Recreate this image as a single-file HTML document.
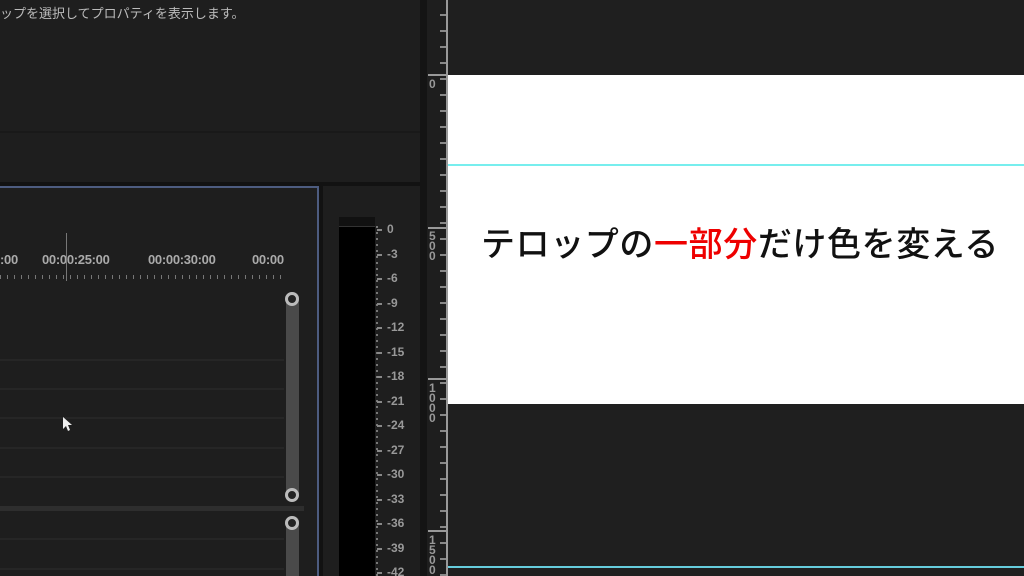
<!DOCTYPE html>
<html><head><meta charset="utf-8"><style>
html,body{margin:0;width:1024px;height:576px;overflow:hidden}
body{background:#1e1e1e;position:relative;font-family:"Liberation Sans","Noto Sans CJK JP",sans-serif}
div{position:absolute;box-sizing:border-box}
.hl{left:0;width:284px;height:2px;background:#262626}
.t{color:#aaa;font-size:13px;top:252px;font-weight:bold;letter-spacing:-0.3px}
.m{color:#999;font-size:12px;left:387px;font-weight:bold}
.k{left:377px;width:5px;height:2px;background:#888}
.c{width:14px;height:14px;border-radius:50%;border:3px solid #bbb;background:#222;left:285px}
</style></head><body>
<div style="left:0;top:0;width:420px;height:182px;background:#1e1e1e"></div>
<div style="left:0;top:131px;width:420px;height:2px;background:#191919"></div>
<div style="left:0;top:3px;color:#bbb;font-size:13px;white-space:nowrap">ップを選択してプロパティを表示します。</div>
<div style="left:0;top:182px;width:428px;height:4px;background:#121212"></div>
<div style="left:319px;top:186px;width:4px;height:390px;background:#121212"></div>
<div style="left:0;top:186px;width:319px;height:390px;border-top:2px solid #4d5c80;border-right:2px solid #4d5c80;background:#1e1e1e"></div>
<div class="t" style="left:0">:00</div>
<div class="t" style="left:42px">00:00:25:00</div>
<div class="t" style="left:148px">00:00:30:00</div>
<div class="t" style="left:252px">00:00</div>
<div style="left:66px;top:233px;width:1px;height:48px;background:#777"></div>
<div style="left:0;top:275px;width:284px;height:4px;background:repeating-linear-gradient(90deg,#777 0 1px,transparent 1px 7px)"></div>
<div class="hl" style="top:359px"></div><div class="hl" style="top:388px"></div><div class="hl" style="top:417px"></div><div class="hl" style="top:447px"></div><div class="hl" style="top:476px"></div>
<div style="left:0;top:506px;width:304px;height:5px;background:#2e2e2e"></div>
<div class="hl" style="top:538px"></div><div class="hl" style="top:568px"></div>
<div style="left:286px;top:292px;width:13px;height:208px;background:#4a4a4a;border-radius:6px"></div>
<div style="left:286px;top:516px;width:13px;height:70px;background:#4a4a4a;border-radius:6px"></div>
<div class="c" style="top:292px"></div><div class="c" style="top:488px"></div><div class="c" style="top:516px"></div>
<svg style="position:absolute;left:62px;top:416px" width="10" height="16"><path d="M1 1 L1 13 L4 10 L6 15 L8 14 L6 9 L10 9 Z" fill="#eee"/></svg>
<div style="left:323px;top:186px;width:97px;height:390px;background:#1e1e1e"></div>
<div style="left:339px;top:217px;width:36px;height:359px;background:#000"></div>
<div style="left:339px;top:217px;width:36px;height:10px;background:#111;border-bottom:1px solid #333"></div>
<div style="left:376px;top:226px;width:2px;height:350px;background:repeating-linear-gradient(180deg,#777 0 2px,transparent 2px 6px)"></div>
<div class="k" style="top:229px"></div><div class="k" style="top:254px"></div><div class="k" style="top:278px"></div><div class="k" style="top:303px"></div><div class="k" style="top:327px"></div><div class="k" style="top:352px"></div><div class="k" style="top:376px"></div><div class="k" style="top:401px"></div><div class="k" style="top:425px"></div><div class="k" style="top:450px"></div><div class="k" style="top:474px"></div><div class="k" style="top:499px"></div><div class="k" style="top:523px"></div><div class="k" style="top:548px"></div><div class="k" style="top:572px"></div>
<div class="m" style="top:222px">0</div><div class="m" style="top:247px">-3</div><div class="m" style="top:271px">-6</div><div class="m" style="top:296px">-9</div><div class="m" style="top:320px">-12</div><div class="m" style="top:345px">-15</div><div class="m" style="top:369px">-18</div><div class="m" style="top:394px">-21</div><div class="m" style="top:418px">-24</div><div class="m" style="top:443px">-27</div><div class="m" style="top:467px">-30</div><div class="m" style="top:492px">-33</div><div class="m" style="top:516px">-36</div><div class="m" style="top:541px">-39</div><div class="m" style="top:565px">-42</div>
<div style="left:420px;top:0;width:7px;height:576px;background:#141414"></div>
<div style="left:427px;top:0;width:21px;height:576px;background:#1e1e1e"></div>
<div style="left:440px;top:0;width:6px;height:576px;background:repeating-linear-gradient(180deg,transparent 0 14px,#888 14px 16px)"></div>
<div style="left:446px;top:0;width:2px;height:576px;background:#999"></div>
<div style="left:428px;top:74px;width:18px;height:2px;background:#999"></div>
<div style="left:428px;top:227px;width:18px;height:2px;background:#999"></div>
<div style="left:428px;top:378px;width:18px;height:2px;background:#999"></div>
<div style="left:428px;top:530px;width:18px;height:2px;background:#999"></div>
<div style="left:429px;top:79px;color:#999;font-size:12px;line-height:10px;font-weight:bold">0</div>
<div style="left:429px;top:231px;color:#999;font-size:12px;line-height:10px;font-weight:bold">5<br>0<br>0</div>
<div style="left:429px;top:383px;color:#999;font-size:12px;line-height:10px;font-weight:bold">1<br>0<br>0<br>0</div>
<div style="left:429px;top:535px;color:#999;font-size:12px;line-height:10px;font-weight:bold">1<br>5<br>0<br>0</div>
<div style="left:448px;top:0;width:576px;height:576px;background:#1f1f1f"></div>
<div style="left:448px;top:75px;width:576px;height:329px;background:#fff"></div>
<div style="left:448px;top:164px;width:576px;height:2px;background:#7ee"></div>
<div style="left:448px;top:566px;width:576px;height:2px;background:#6cd"></div>
<div style="left:481px;top:217px;font-size:34px;color:#111;white-space:nowrap;font-weight:500;letter-spacing:0.6px">テロップの<span style="color:#e00">一部分</span>だけ色を変える</div>
</body></html>
